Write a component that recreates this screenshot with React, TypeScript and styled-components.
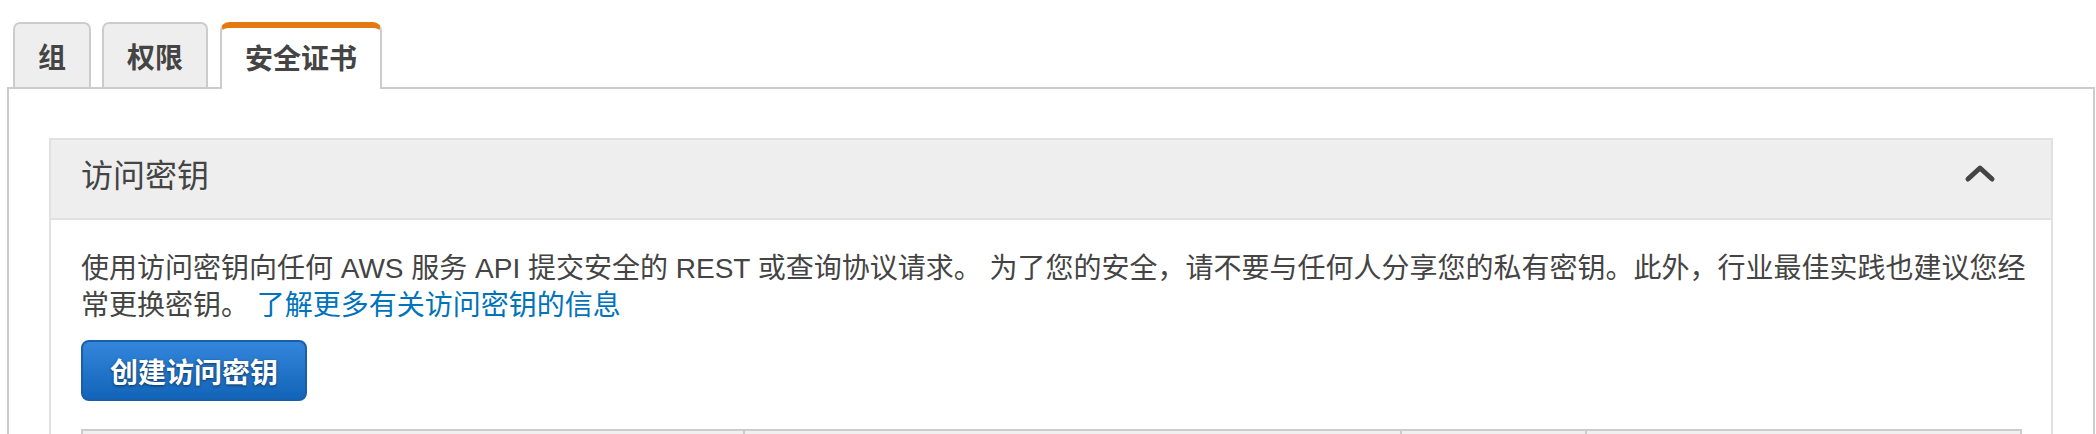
import React from "react";
import styled, { createGlobalStyle, css } from "styled-components";

const GlobalStyle = createGlobalStyle`
  html, body {
    margin: 0;
    padding: 0;
    background: #ffffff;
  }
  body {
    font-family: "Liberation Sans", "Noto Sans CJK SC", sans-serif;
    color: #444444;
  }
  * { box-sizing: border-box; }
`;

const Page = styled.div`
  padding: 22px 1px 0 7px;
`;

const TabList = styled.div`
  display: flex;
  align-items: flex-end;
  gap: 11px;
  padding-left: 6px;
  position: relative;
  z-index: 1;
`;

const Tab = styled.button<{ $active?: boolean }>`
  display: flex;
  align-items: center;
  justify-content: center;
  height: 65px;
  padding: 0 23px;
  margin: 0;
  font-family: "Liberation Sans", "Noto Sans CJK SC", sans-serif;
  font-size: 28px;
  font-weight: 600;
  color: #444444;
  background: #eeeeee;
  border: 2px solid #cccccc;
  border-bottom: none;
  border-radius: 7px 7px 0 0;
  cursor: pointer;
  ${(p) =>
    p.$active &&
    css`
      height: 67px;
      margin-bottom: -2px;
      margin-left: 1px;
      background: #ffffff;
      border-top: 6px solid #e47911;
      border-radius: 9px 9px 0 0;
      padding-bottom: 4px;
    `}
`;

const TabPanel = styled.div`
  border: 2px solid #cccccc;
  border-bottom: none;
  padding: 49px 40px 0;
  min-height: 360px;
`;

const Panel = styled.section`
  border: 2px solid #e1e1e1;
  border-bottom: none;
`;

const PanelHeader = styled.div`
  display: flex;
  align-items: center;
  justify-content: space-between;
  height: 80px;
  padding: 0 55px 12px 30px;
  background: #eeeeee;
  border-bottom: 2px solid #e1e1e1;
`;

const PanelTitle = styled.h2`
  margin: 0;
  font-size: 32px;
  font-weight: 400;
  color: #444444;
`;

const Collapse = styled.button`
  display: flex;
  align-items: center;
  justify-content: center;
  padding: 0;
  border: none;
  background: transparent;
  cursor: pointer;
`;

const PanelBody = styled.div`
  padding: 30px 30px 0;
`;

const Description = styled.p`
  margin: 0 -14px 0 0;
  font-size: 28px;
  line-height: 37px;
  color: #444444;
`;

const Link = styled.a`
  color: #0073bb;
  text-decoration: none;
`;

const PrimaryButton = styled.button`
  display: inline-flex;
  align-items: center;
  justify-content: center;
  margin-top: 16px;
  height: 61px;
  padding: 0 27px;
  font-family: "Liberation Sans", "Noto Sans CJK SC", sans-serif;
  font-size: 28px;
  font-weight: 700;
  color: #ffffff;
  text-shadow: 0 1px 3px rgba(0, 0, 0, 0.55);
  background: linear-gradient(#3486dc, #1264b8);
  border: 2px solid #1a5ea8;
  border-radius: 8px;
  cursor: pointer;
`;

const KeyTable = styled.table`
  margin-top: 28px;
  width: 100%;
  border-collapse: collapse;
  table-layout: fixed;
  border-top: 2px solid #cccccc;
`;

const Col = styled.col<{ $w: number }>`
  width: ${(p) => p.$w}px;
`;

const HeadCell = styled.th`
  height: 60px;
  padding: 12px 20px;
  text-align: left;
  font-size: 26px;
  font-weight: 700;
  color: #444444;
  background: #f0f0f0;
  border-left: 2px solid #cccccc;
  border-right: 2px solid #cccccc;
`;

const ChevronUp = () => (
  <svg width="32" height="20" viewBox="0 0 32 20" aria-hidden="true">
    <path
      d="M4 16 L16 5 L28 16"
      fill="none"
      stroke="#444444"
      strokeWidth="5"
      strokeLinecap="round"
      strokeLinejoin="round"
    />
  </svg>
);

export default function App() {
  return (
    <>
      <GlobalStyle />
      <Page>
        <TabList>
          <Tab>组</Tab>
          <Tab>权限</Tab>
          <Tab $active>安全证书</Tab>
        </TabList>
        <TabPanel>
          <Panel>
            <PanelHeader>
              <PanelTitle>访问密钥</PanelTitle>
              <Collapse aria-label="收起">
                <ChevronUp />
              </Collapse>
            </PanelHeader>
            <PanelBody>
              <Description>
                使用访问密钥向任何 AWS 服务 API 提交安全的 REST 或查询协议请求。 为了您的安全，请不要与任何人分享您的私有密钥。此外，行业最佳实践也建议您经常更换密钥。{" "}
                <Link href="#">了解更多有关访问密钥的信息</Link>
              </Description>
              <PrimaryButton>创建访问密钥</PrimaryButton>
              <KeyTable>
                <colgroup>
                  <Col $w={662} />
                  <Col $w={657} />
                  <Col $w={185} />
                  <Col $w={435} />
                </colgroup>
                <thead>
                  <tr>
                    <HeadCell>创建时间</HeadCell>
                    <HeadCell>访问密钥 ID</HeadCell>
                    <HeadCell>上次使用</HeadCell>
                    <HeadCell>状态</HeadCell>
                  </tr>
                </thead>
              </KeyTable>
            </PanelBody>
          </Panel>
        </TabPanel>
      </Page>
    </>
  );
}
